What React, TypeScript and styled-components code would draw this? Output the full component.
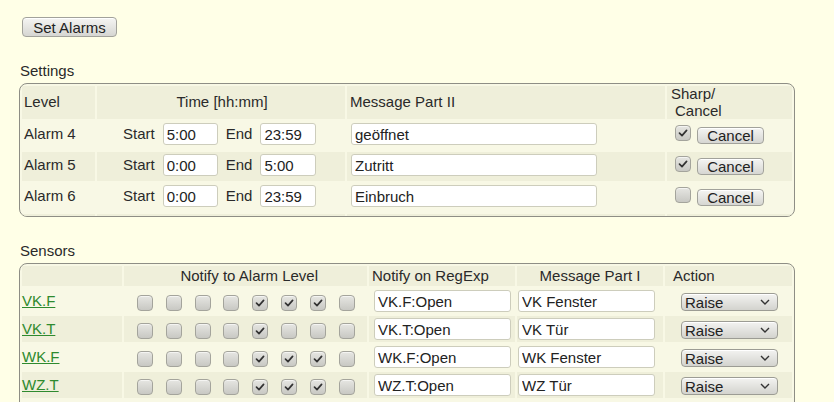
import React from 'react'
import styled, { createGlobalStyle } from 'styled-components'

const GlobalStyle = createGlobalStyle`
  html, body {
    margin: 0;
    padding: 0;
    background: #ffffe7;
    overflow: hidden;
  }
  body {
    font-family: "Liberation Sans", Arial, sans-serif;
    font-size: 15px;
    color: #2a2a2a;
  }
`

const Page = styled.div`
  padding: 17px 0 0 19px;
  width: 776px;
`

const Button = styled.button<{ $w: number; $h: number }>`
  display: inline-block;
  width: ${(p) => p.$w}px;
  height: ${(p) => p.$h}px;
  padding: 0;
  font: 15px "Liberation Sans", Arial, sans-serif;
  line-height: 1;
  color: #222;
  background: linear-gradient(#f5f5f3, #d6d6d2);
  border: 1px solid #a2a29b;
  border-radius: 4px;
  box-shadow: inset 0 1px 0 #ffffff;
`

const TopButton = styled(Button)`
  display: block;
  margin-left: 3px;
`

const SectionTitle = styled.div`
  margin: 25px 0 4px 1px;
  line-height: 17px;
`

const Panel = styled.div<{ $height?: number }>`
  box-sizing: border-box;
  height: ${(p) => (p.$height ? `${p.$height}px` : 'auto')};
  border: 1px solid #8e8e85;
  border-radius: 8px;
  background: #f8f8e5;
  overflow: hidden;
`

const Table = styled.table`
  width: 100%;
  border-collapse: separate;
  border-spacing: 2px;
  table-layout: fixed;
`

const Col = styled.col<{ $w: number }>`
  width: ${(p) => p.$w}px;
`

const HeadRow = styled.tr<{ $h: number }>`
  height: ${(p) => p.$h}px;
`

const Head = styled.th<{ $align?: string; $pad?: string }>`
  background: #efefda;
  font-weight: normal;
  text-align: ${(p) => p.$align || 'left'};
  padding: ${(p) => p.$pad || '0 0 0 2px'};
  vertical-align: middle;
  line-height: 16.5px;
  white-space: nowrap;
`

const SubLine = styled.span`
  display: block;
  padding-left: 4px;
`

const Row = styled.tr<{ $h: number; $dark: boolean }>`
  height: ${(p) => p.$h}px;
  td {
    background: ${(p) => (p.$dark ? '#efefda' : 'transparent')};
  }
`

const Cell = styled.td`
  padding: 2px 0 0 0;
  vertical-align: top;
  white-space: nowrap;
`

const Line = styled.div<{ $pad?: number }>`
  display: flex;
  align-items: flex-start;
  padding-left: ${(p) => p.$pad || 0}px;
`

const Label = styled.span<{ $gap?: number }>`
  line-height: 22px;
  margin-left: ${(p) => p.$gap || 0}px;
`

const TextField = styled.input<{ $w: number; $gap?: number }>`
  box-sizing: border-box;
  width: ${(p) => p.$w}px;
  height: 22px;
  margin: 0 0 0 ${(p) => p.$gap || 0}px;
  padding: 0 3px;
  font: 15px "Liberation Sans", Arial, sans-serif;
  color: #222;
  background: #ffffff;
  border: 1px solid #cdcdbc;
  border-radius: 3px;
  outline: none;
`

const Box = styled.span<{ $top?: number; $gap?: number }>`
  box-sizing: border-box;
  display: inline-flex;
  align-items: center;
  justify-content: center;
  flex: none;
  width: 16px;
  height: 16px;
  margin: ${(p) => p.$top || 0}px 0 0 ${(p) => p.$gap || 0}px;
  border: 1px solid #a4a49c;
  border-radius: 4px;
  background: linear-gradient(#e6e6e2, #c8c8c3);
  box-shadow: inset 0 1px 0 #f4f4f2;
`

const Checks = styled.div`
  display: flex;
  gap: 12.8px;
  padding: 5px 0 0 13px;
`

const CancelButton = styled(Button)`
  margin: 4px 0 0 6px;
`

const SensorLink = styled.a`
  display: inline-block;
  line-height: 22px;
  color: #2e8a2e;
  text-decoration: underline;
`

const Select = styled.div`
  box-sizing: border-box;
  display: flex;
  align-items: center;
  justify-content: space-between;
  width: 97px;
  height: 18px;
  margin: 3px 0 0 16px;
  padding: 0 7px 0 3px;
  border: 1px solid #9c9c94;
  border-radius: 4px;
  background: linear-gradient(#f3f3f1, #d3d3ce);
  box-shadow: inset 0 1px 0 #ffffff;
  color: #222;
`

const Check = ({ on, top, gap }: { on: boolean; top?: number; gap?: number }) => (
  <Box $top={top} $gap={gap}>
    {on && (
      <svg width="12" height="12" viewBox="0 0 12 12">
        <path d="M2.5 6.2 L5 8.6 L9.6 3.4" fill="none" stroke="#333" strokeWidth="1.7" strokeLinecap="round" strokeLinejoin="round" />
      </svg>
    )}
  </Box>
)

// the last row only peeks out below the panel's fixed height
const alarms = [
  { level: 'Alarm 4', start: '5:00', end: '23:59', msg: 'geöffnet', sharp: true, hidden: false },
  { level: 'Alarm 5', start: '0:00', end: '5:00', msg: 'Zutritt', sharp: true, hidden: false },
  { level: 'Alarm 6', start: '0:00', end: '23:59', msg: 'Einbruch', sharp: false, hidden: false },
  { level: '', start: '', end: '', msg: '', sharp: false, hidden: true },
]

const sensors = [
  { name: 'VK.F', re: 'VK.F:Open', msg: 'VK Fenster', levels: [0, 0, 0, 0, 1, 1, 1, 0] },
  { name: 'VK.T', re: 'VK.T:Open', msg: 'VK Tür', levels: [0, 0, 0, 0, 1, 0, 0, 0] },
  { name: 'WK.F', re: 'WK.F:Open', msg: 'WK Fenster', levels: [0, 0, 0, 0, 1, 1, 1, 0] },
  { name: 'WZ.T', re: 'WZ.T:Open', msg: 'WZ Tür', levels: [0, 0, 0, 0, 1, 1, 1, 0] },
]

const App = () => {
  return (
    <Page>
      <GlobalStyle />
      <TopButton $w={95} $h={20}>Set Alarms</TopButton>

      <SectionTitle>Settings</SectionTitle>
      <Panel $height={134}>
        <Table>
          <colgroup>
            <Col $w={73} />
            <Col $w={248} />
            <Col $w={318} />
            <Col $w={125} />
          </colgroup>
          <tbody>
            <HeadRow $h={33}>
              <Head>Level</Head>
              <Head $align="center">Time [hh:mm]</Head>
              <Head $pad="0 0 0 3px">Message Part II</Head>
              <Head $pad="0 0 0 4px">
                Sharp/
                <SubLine>Cancel</SubLine>
              </Head>
            </HeadRow>
            {alarms.map((a, i) => (
              <Row key={i} $h={29} $dark={i % 2 === 1}>
                <Cell>
                  <Line $pad={2}>
                    <Label>{a.level}</Label>
                  </Line>
                </Cell>
                <Cell>
                  <Line $pad={26}>
                    <Label>{a.hidden ? '' : 'Start'}</Label>
                    <TextField $w={55} $gap={a.hidden ? 40 : 8} defaultValue={a.start} />
                    <Label $gap={8}>{a.hidden ? '' : 'End'}</Label>
                    <TextField $w={56} $gap={a.hidden ? 35 : 8} defaultValue={a.end} />
                  </Line>
                </Cell>
                <Cell>
                  <Line>
                    <TextField $w={246} $gap={4} defaultValue={a.msg} />
                  </Line>
                </Cell>
                <Cell>
                  <Line>
                    <Check on={a.sharp} top={2} gap={8} />
                    <CancelButton $w={67} $h={17}>{a.hidden ? '' : 'Cancel'}</CancelButton>
                  </Line>
                </Cell>
              </Row>
            ))}
          </tbody>
        </Table>
      </Panel>

      <SectionTitle>Sensors</SectionTitle>
      <Panel>
        <Table>
          <colgroup>
            <Col $w={100} />
            <Col $w={243} />
            <Col $w={146} />
            <Col $w={146} />
            <Col $w={127} />
          </colgroup>
          <tbody>
            <HeadRow $h={20}>
              <Head />
              <Head $align="right" $pad="0 49px 0 0">Notify to Alarm Level</Head>
              <Head $pad="0 0 0 3px">Notify on RegExp</Head>
              <Head $align="center" $pad="0">Message Part I</Head>
              <Head $pad="0 0 0 8px">Action</Head>
            </HeadRow>
            {sensors.map((s, i) => (
              <Row key={s.name} $h={26} $dark={i % 2 === 1}>
                <Cell>
                  <SensorLink href="#">{s.name}</SensorLink>
                </Cell>
                <Cell>
                  <Checks>
                    {s.levels.map((on, j) => (
                      <Check key={j} on={on === 1} />
                    ))}
                  </Checks>
                </Cell>
                <Cell>
                  <Line>
                    <TextField $w={137} $gap={5} defaultValue={s.re} />
                  </Line>
                </Cell>
                <Cell>
                  <Line>
                    <TextField $w={137} $gap={1} defaultValue={s.msg} />
                  </Line>
                </Cell>
                <Cell>
                  <Select>
                    <span>Raise</span>
                    <svg width="10" height="6" viewBox="0 0 10 6">
                      <path d="M1 1 L5 5 L9 1" fill="none" stroke="#333" strokeWidth="1.4" />
                    </svg>
                  </Select>
                </Cell>
              </Row>
            ))}
            <Row $h={26} $dark={false}>
              <Cell />
              <Cell />
              <Cell />
              <Cell />
              <Cell />
            </Row>
          </tbody>
        </Table>
      </Panel>
    </Page>
  )
}

export default App
